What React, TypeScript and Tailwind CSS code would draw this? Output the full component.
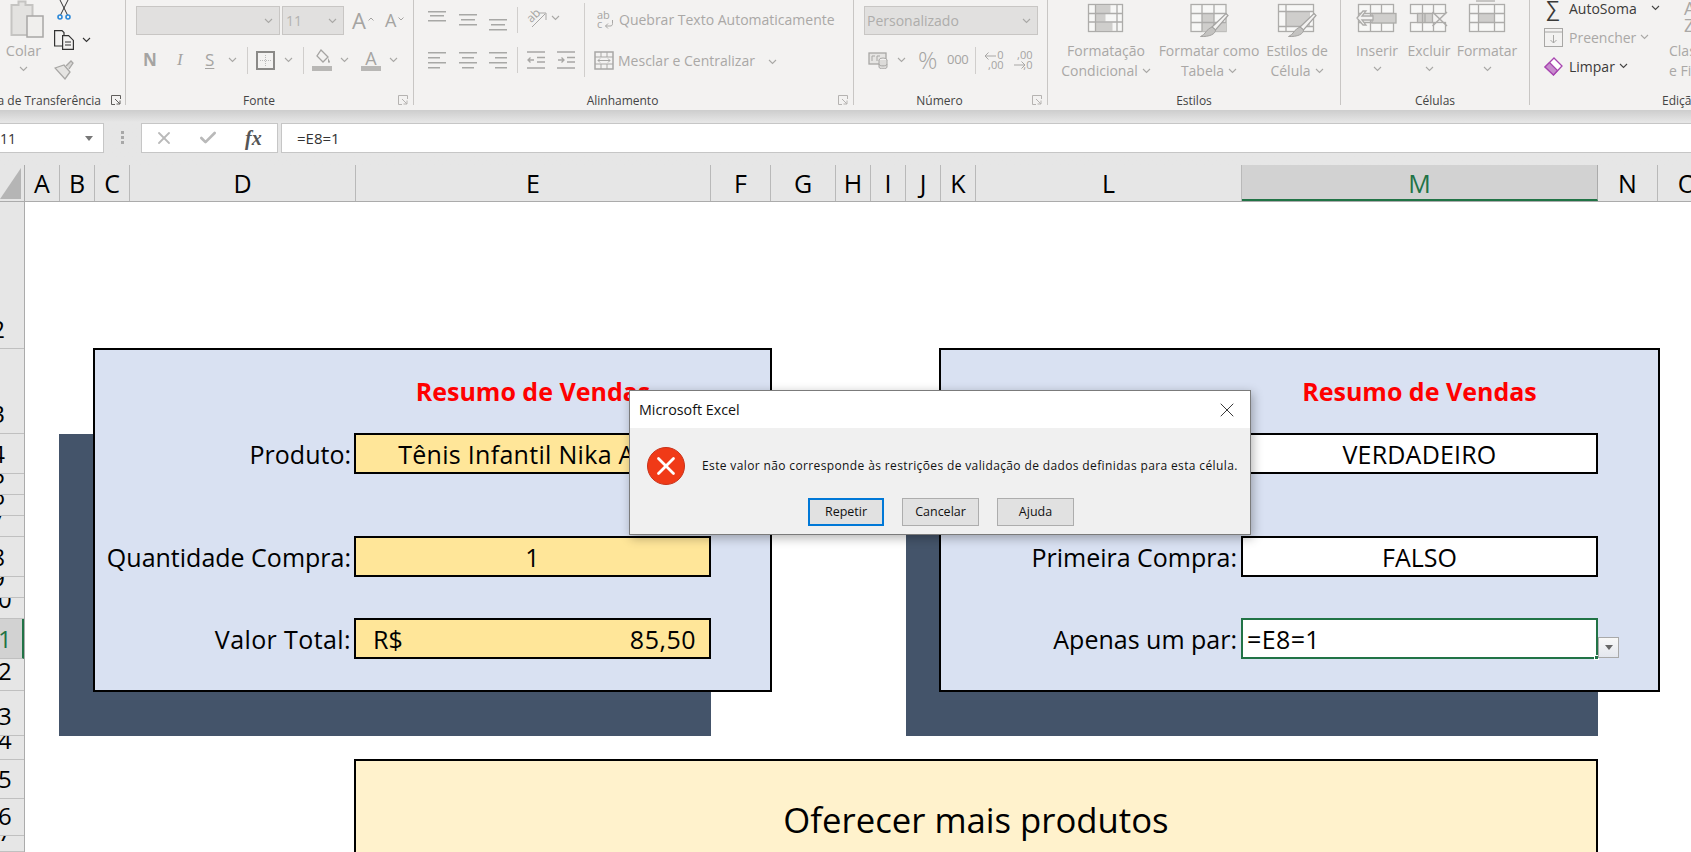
import { Check, X } from "lucide-react";

const gray = "#a9a8a6";
const st = "#adacaa";
const shade = "#cfcecc";

function Chev({ className = "", color = gray }: { className?: string; color?: string }) {
  return (
    <svg width="9" height="6" viewBox="0 0 9 6" className={`shrink-0 ${className}`}>
      <path d="M1 1l3.5 3.5L8 1" fill="none" stroke={color} strokeWidth="1.1" />
    </svg>
  );
}

function Launcher({ className = "", dark = false }: { className?: string; dark?: boolean }) {
  const c = dark ? "#605e5c" : "#b5b3b1";
  return (
    <svg width="10" height="10" viewBox="0 0 10 10" className={`absolute bottom-0 ${className}`}>
      <path d="M9.5 4V.5H.5v9H4" fill="none" stroke={c} />
      <path d="M4 4l5 5M9 5.5V9H5.5" fill="none" stroke={c} />
    </svg>
  );
}

// linhas de alinhamento: cada item e [y, x, largura]
function Lines({ rows }: { rows: number[][] }) {
  return (
    <svg width="19" height="40" viewBox="0 0 19 40" className="shrink-0">
      {rows.map(([y, x, w]) => (
        <rect key={y} x={x} y={y} width={w} height="1.5" fill="#a8a8a6" />
      ))}
    </svg>
  );
}

function Sep({ className = "" }: { className?: string }) {
  return <div className={`w-px bg-[#d0cecc] shrink-0 ${className}`} />;
}

function Brush() {
  return (
    <>
      <path d="M38 13.5l2 2-12.5 14.5-3.5-3z" fill="#f3f2f1" stroke="#a3a2a0" strokeWidth="1.2" />
      <path d="M24 27l3.5 3c0 4-6 7-15 6.5 5-1.500 6-8 11.500-9.500z" fill="#c4c3c1" stroke="#a3a2a0" strokeWidth="1" />
    </>
  );
}

type IconKind = "cond" | "table" | "style" | "insert" | "delete" | "format";

// desenhos dos botoes grandes de Estilos e Celulas
function TableIcon({ kind }: { kind: IconKind }) {
  return (
    <svg width="42" height="38" viewBox="0 0 42 38" className="shrink-0">
      <g fill="none" stroke={st} strokeWidth="1.3">
        {kind === "cond" && (
          <>
            <rect x="3.500" y="4.500" width="34" height="27" fill="#f7f7f6" />
            <rect x="10.500" y="5" width="15" height="8.500" fill={shade} stroke="none" />
            <rect x="10.500" y="14" width="10" height="7.500" fill={shade} stroke="none" />
            <rect x="10.500" y="22.500" width="17" height="8.500" fill={shade} stroke="none" />
            <path d="M3.500 13.500h34M3.500 22h34M10.500 4.500v27M32 4.500v27" />
          </>
        )}
        {kind === "table" && (
          <>
            <rect x="3" y="4.500" width="35" height="27" fill="#f7f7f6" />
            <rect x="14" y="13.500" width="12" height="9" fill={shade} stroke="none" />
            <rect x="14" y="22.500" width="24" height="9" fill={shade} stroke="none" />
            <path d="M3 13.500h35M3 22.500h35M14 4.500v27M26 4.500v27" />
            <Brush />
          </>
        )}
        {kind === "style" && (
          <>
            <rect x="2.500" y="4.500" width="35" height="27" fill="#f7f7f6" />
            <rect x="10" y="11.500" width="24" height="15" fill={shade} stroke="none" />
            <path d="M2.500 11.500h35M2.500 26.500h35M10 4.500v27" />
            <Brush />
          </>
        )}
        {kind === "insert" && (
          <>
            <rect x="2.500" y="4.500" width="35" height="27" fill="#f7f7f6" />
            <path d="M2.500 13.500h35M2.500 22.500h35M14.500 4.500v27M25.500 4.500v27" />
            <rect x="16" y="13.500" width="24" height="9.500" fill={shade} />
            <path d="M17 16H6l4-5H7l-6 7 6 7h3l-4-5h11z" fill="#f3f2f1" />
          </>
        )}
        {kind === "delete" && (
          <>
            <rect x="2.500" y="4.500" width="35" height="9" fill="#f7f7f6" />
            <rect x="2.500" y="22.500" width="35" height="9" fill="#f7f7f6" />
            <rect x="9.500" y="13.500" width="15" height="9" fill={shade} />
            <path d="M14.500 4.500v27M25.500 4.500v9M25.500 22.500v9M17 13.500v9" />
            <path d="M24.500 12l14.500 14M39 12L24.500 26" stroke={st} strokeWidth="1.500" />
          </>
        )}
        {kind === "format" && (
          <>
            <path d="M10 1h19" />
            <rect x="3.500" y="4.500" width="35" height="27" fill="#f7f7f6" />
            <rect x="12.500" y="13.500" width="16" height="9" fill={shade} stroke="none" />
            <path d="M3.500 13.500h35M3.500 22.500h35M12.500 4.500v27M28.500 4.500v27" />
          </>
        )}
      </g>
    </svg>
  );
}

function BigButton({ kind, lines, width, chevOnly }: { kind: IconKind; lines: string[]; width: string; chevOnly?: boolean }) {
  return (
    <div className={`flex flex-col items-center text-[14px] leading-[20px] text-[#aaa8a6] ${width}`}>
      <div className="h-[41px]">
        <TableIcon kind={kind} />
      </div>
      <div className="whitespace-nowrap">{lines[0]}</div>
      {chevOnly ? (
        <Chev className="mt-[5px]" />
      ) : (
        <div className="flex items-center gap-[4px] whitespace-nowrap">
          {lines[1]}
          <Chev />
        </div>
      )}
    </div>
  );
}

function Caret({ down = false }: { down?: boolean }) {
  return (
    <svg width="6" height="4" viewBox="0 0 6 4" className="self-start mt-[11px] ml-[2px]">
      <path d={down ? "M.5.5L3 3 5.500.5" : "M.5 3.500L3 1l2.500 2.500"} fill="none" stroke="#a5a4a2" />
    </svg>
  );
}

function Ribbon() {
  return (
    <div className="flex h-[110px] bg-[#f3f2f1] overflow-hidden text-[12px] text-[#444]">
      {/* Area de transferencia */}
      <div className="relative w-[126px] h-[105px] shrink-0 border-r border-[#c8c6c4]">
        <div className="flex h-[88px]">
          <div className="w-[47px] flex flex-col items-center">
            <svg width="47" height="38" viewBox="0 0 47 38" className="shrink-0">
              <path d="M11.500 5h7V1.500h7V5h7v30h-21z" fill="#e3e2e0" stroke="#c5c4c2" strokeWidth="2" />
              <rect x="27" y="16" width="16" height="21" fill="#f0efed" stroke="#a8a7a5" strokeWidth="1.500" />
            </svg>
            <span className="text-[14.5px] leading-[20px] text-[#aaa8a6] mt-[3px]">Colar</span>
            <Chev className="mt-[5px]" />
          </div>
          <div className="flex flex-col pl-[7px]">
            <svg width="15" height="20" viewBox="0 0 15 20" className="ml-[3px] shrink-0">
              <path d="M3 0l7.500 15M11 0L3.500 15" fill="none" stroke="#333" strokeWidth="1" />
              <circle cx="3" cy="17" r="2" fill="none" stroke="#2b88d8" strokeWidth="1.600" />
              <circle cx="11" cy="17" r="2" fill="none" stroke="#2b88d8" strokeWidth="1.600" />
            </svg>
            <div className="flex items-center mt-[10px]">
              <svg width="20" height="20" viewBox="0 0 20 20" className="shrink-0">
                <path d="M8 16H.6V.6H8l2 2v3" fill="none" stroke="#333" strokeWidth="1.200" />
                <path d="M8.600 5.600h6l4.800 4.800v9H8.600z" fill="#f3f2f1" stroke="#333" strokeWidth="1.200" />
                <path d="M11 12h6M11 15h6" stroke="#333" />
              </svg>
              <Chev color="#333" className="ml-[8px]" />
            </div>
            <svg width="20" height="20" viewBox="0 0 20 20" className="mt-[10px] shrink-0">
              <path d="M1 8l9-3 6 7-5 7z" fill="#e5e4e2" stroke="#a8a7a5" strokeWidth="1.300" />
              <path d="M12 6l5-5 2 2-4 6" fill="#d8d7d5" stroke="#a8a7a5" strokeWidth="1.300" />
            </svg>
          </div>
        </div>
        <div className="flex justify-end pr-[24px] whitespace-nowrap leading-[18px] pt-[4px] text-[#444] h-[17px]">Área de Transferência</div>
        <Launcher dark className="left-[111px]" />
      </div>

      {/* Fonte */}
      <div className="relative w-[288px] h-[105px] shrink-0 border-r border-[#c8c6c4]">
        <div className="h-[88px] pl-[10px] pt-[6px]">
          <div className="flex items-center">
            <div className="w-[144px] h-[29px] bg-[#e1e0df] border border-[#c8c6c4] flex items-center justify-end pr-[6px]">
              <Chev />
            </div>
            <div className="ml-[2px] w-[62px] h-[29px] bg-[#e1e0df] border border-[#c8c6c4] flex items-center justify-between pl-[3px] pr-[6px] text-[14px] text-[#b3b2b0]">
              11
              <Chev />
            </div>
            <span className="ml-[8px] w-[14px] text-[22px] leading-[29px] text-[#a5a4a2]">A</span>
            <Caret />
            <span className="ml-[11px] w-[11px] text-[18px] leading-[29px] text-[#a5a4a2]">A</span>
            <Caret down />
          </div>
          <div className="flex items-center h-[30px] mt-[10px] text-[#a5a4a2]">
            <span className="ml-[7px] w-[12px] text-[17px] font-bold leading-[30px]">N</span>
            <span className="ml-[22px] w-[7px] text-[17px] italic font-['Liberation_Serif',serif] leading-[30px]">I</span>
            <span className="ml-[21px] w-[10px] text-[17px] underline underline-offset-2 leading-[30px]">S</span>
            <Chev className="ml-[13px]" />
            <Sep className="h-[27px] ml-[10px]" />
            <svg width="19" height="19" viewBox="0 0 19 19" className="ml-[8px] shrink-0">
              <rect x="1" y="1" width="17" height="17" fill="none" stroke="#8a8987" strokeWidth="2" />
              <path d="M9.500 4v11M4 9.500h11" stroke="#bbb" strokeDasharray="1 1" />
            </svg>
            <Chev className="ml-[9px]" />
            <Sep className="h-[27px] ml-[10px]" />
            <svg width="20" height="22" viewBox="0 0 20 22" className="ml-[8px] shrink-0">
              <path d="M9 1l7 7-5 5-6-6z" fill="#f3f2f1" stroke="#a5a4a2" strokeWidth="1.300" />
              <path d="M16 9c1 2 2 3 2 4s-2 1-2 0z" fill="#a5a4a2" />
              <rect x="0" y="17" width="20" height="5" fill="#b8b7b5" />
            </svg>
            <Chev className="ml-[8px]" />
            <div className="ml-[12px] relative w-[20px] h-[22px] text-center text-[18px] leading-[19px]">
              A
              <div className="absolute bottom-0 left-0 w-[20px] h-[5px] bg-[#b8b7b5]" />
            </div>
            <Chev className="ml-[8px]" />
          </div>
        </div>
        <div className="h-[17px] text-center leading-[18px] pt-[4px] pr-[21px]">Fonte</div>
        <Launcher className="right-[5px]" />
      </div>

      {/* Alinhamento */}
      <div className="relative w-[440px] h-[105px] shrink-0 border-r border-[#c8c6c4]">
        <div className="h-[88px] pl-[14px] flex text-[14px] text-[#aaa8a6]">
          <div className="w-[156px] shrink-0">
            <div className="flex items-start h-[40px]">
              <Lines rows={[[11, 0, 18], [15, 2, 14], [20, 0, 18]]} />
              <div className="ml-[12px]">
                <Lines rows={[[14, 0, 18], [19, 2, 14], [24, 0, 18]]} />
              </div>
              <div className="ml-[11px]">
                <Lines rows={[[19, 0, 18], [24, 2, 14], [29, 0, 18]]} />
              </div>
              <Sep className="h-[26px] mt-[7px] ml-[9px]" />
              <svg width="21" height="22" viewBox="0 0 21 22" className="mt-[7px] ml-[8px] shrink-0">
                <text x="1" y="14" fontSize="12" fill="#a5a4a2" transform="rotate(-45 6 10)">ab</text>
                <path d="M6 20L19 7M13 6h7v7" fill="none" stroke="#a8a7a5" />
              </svg>
              <Chev className="mt-[15px] ml-[4px]" />
            </div>
            <div className="flex items-start h-[40px]">
              <Lines rows={[[12, 0, 18], [17, 0, 12], [22, 0, 18], [27, 0, 12]]} />
              <div className="ml-[12px]">
                <Lines rows={[[12, 0, 18], [17, 3, 12], [22, 0, 18], [27, 3, 12]]} />
              </div>
              <div className="ml-[11px]">
                <Lines rows={[[12, 0, 18], [17, 6, 12], [22, 0, 18], [27, 6, 12]]} />
              </div>
              <Sep className="h-[26px] mt-[7px] ml-[9px]" />
              <svg width="18" height="18" viewBox="0 0 18 18" className="mt-[11px] ml-[9px] shrink-0">
                <path d="M0 1h18M10 6.500h8M10 11h8M0 17h18M7 9H1M3.500 6.500L1 9l2.500 2.500" fill="none" stroke="#a8a7a5" strokeWidth="1.300" />
              </svg>
              <svg width="18" height="18" viewBox="0 0 18 18" className="mt-[11px] ml-[12px] shrink-0">
                <path d="M0 1h18M10 6.500h8M10 11h8M0 17h18M1 9h6M4.500 6.500L7 9l-2.500 2.500" fill="none" stroke="#a8a7a5" strokeWidth="1.300" />
              </svg>
            </div>
          </div>
          <Sep className="h-[74px] mt-[3px]" />
          <div className="pl-[12px]">
            <div className="flex items-start h-[40px]">
              <svg width="18" height="18" viewBox="0 0 18 18" className="mt-[11px] shrink-0">
                <text x="0" y="8" fontSize="11" fill="#a5a4a2">ab</text>
                <text x="0" y="17" fontSize="11" fill="#a5a4a2">c</text>
                <path d="M15.500 9v3.500c0 2-1 2.500-2.500 2.500H8.500M11 12.500L8.500 15l2.500 2.500" fill="none" stroke="#a8a7a5" />
              </svg>
              <span className="ml-[4px] mt-[10px] whitespace-nowrap leading-[20px]">Quebrar Texto Automaticamente</span>
            </div>
            <div className="flex items-start h-[40px] -ml-[3px]">
              <svg width="20" height="19" viewBox="0 0 20 19" className="mt-[11px] shrink-0">
                <rect x="1" y="1" width="18" height="17" fill="#f3f2f1" stroke="#a8a7a5" strokeWidth="1.500" />
                <path d="M1 6h18M1 13h18M7 1v5M13 1v5M7 13v5M13 13v5M4 9.500h12M6 7.500l-2 2 2 2M14 7.500l2 2-2 2" fill="none" stroke="#a8a7a5" />
              </svg>
              <span className="ml-[4px] mt-[11px] whitespace-nowrap leading-[20px]">Mesclar e Centralizar</span>
              <Chev className="mt-[19px] ml-[13px]" />
            </div>
          </div>
        </div>
        <div className="h-[17px] text-center leading-[18px] pt-[4px] pr-[22px]">Alinhamento</div>
        <Launcher className="right-[5px]" />
      </div>

      {/* Numero */}
      <div className="relative w-[194px] h-[105px] shrink-0 border-r border-[#c8c6c4]">
        <div className="h-[88px] pl-[10px] pt-[6px] text-[#a5a4a2]">
          <div className="w-[174px] h-[29px] bg-[#e1e0df] border border-[#c8c6c4] flex items-center justify-between pl-[2px] pr-[6px] text-[14px] text-[#aeadab]">
            Personalizado
            <Chev />
          </div>
          <div className="flex items-center h-[30px] mt-[10px]">
            <svg width="20" height="17" viewBox="0 0 20 17" className="ml-[4px] shrink-0">
              <rect x="1" y="1" width="17" height="11" fill="#e6e5e3" stroke="#a8a7a5" strokeWidth="1.300" />
              <path d="M4 4h3M4 4v5M9 4h3M9 4v5" stroke="#a8a7a5" />
              <ellipse cx="15" cy="8" rx="4" ry="2" fill="#f3f2f1" stroke="#a8a7a5" />
              <path d="M11 8v7c0 2.500 8 2.500 8 0V8M11 12c0 2.500 8 2.500 8 0" fill="#dcdbd9" stroke="#a8a7a5" />
            </svg>
            <Chev className="ml-[9px]" />
            <span className="ml-[12px] w-[18px] text-[24px] leading-[30px] font-light">%</span>
            <span className="ml-[11px] w-[20px] text-[13px] tracking-[-0.3px]">000</span>
            <Sep className="h-[27px] ml-[8px]" />
            <svg width="20" height="20" viewBox="0 0 20 20" className="ml-[8px] shrink-0">
              <path d="M12 6H1M4.500 2.500L1 6l3.500 3.500" fill="none" stroke="#a8a7a5" />
              <text x="19.500" y="9" fontSize="11" textAnchor="end" fill="#a5a4a2">0</text>
              <text x="19.500" y="19" fontSize="11" textAnchor="end" fill="#a5a4a2">,00</text>
            </svg>
            <svg width="20" height="20" viewBox="0 0 20 20" className="ml-[9px] shrink-0">
              <text x="19.500" y="9" fontSize="11" textAnchor="end" fill="#a5a4a2">,00</text>
              <path d="M1 15h11M8.500 11.500L12 15l-3.500 3.500" fill="none" stroke="#a8a7a5" />
              <text x="19.500" y="19" fontSize="11" textAnchor="end" fill="#a5a4a2">,0</text>
            </svg>
          </div>
        </div>
        <div className="h-[17px] text-center leading-[18px] pt-[4px] pr-[22px]">Número</div>
        <Launcher className="right-[5px]" />
      </div>

      {/* Estilos */}
      <div className="w-[293px] h-[105px] shrink-0 border-r border-[#c8c6c4]">
        <div className="h-[88px] flex pl-[8px]">
          <BigButton kind="cond" lines={["Formatação", "Condicional"]} width="w-[100px]" />
          <BigButton kind="table" lines={["Formatar como", "Tabela"]} width="w-[106px]" />
          <BigButton kind="style" lines={["Estilos de", "Célula"]} width="w-[70px]" />
        </div>
        <div className="h-[17px] text-center leading-[18px] pt-[4px]">Estilos</div>
      </div>

      {/* Celulas */}
      <div className="w-[189px] h-[105px] shrink-0 border-r border-[#c8c6c4]">
        <div className="h-[88px] flex pl-[10px]">
          <BigButton kind="insert" lines={["Inserir"]} width="w-[52px]" chevOnly />
          <BigButton kind="delete" lines={["Excluir"]} width="w-[52px]" chevOnly />
          <BigButton kind="format" lines={["Formatar"]} width="w-[64px]" chevOnly />
        </div>
        <div className="h-[17px] text-center leading-[18px] pt-[4px]">Células</div>
      </div>

      {/* Edicao */}
      <div className="flex-1 min-w-0 h-[105px]">
        <div className="h-[88px] flex pl-[14px] text-[14px]">
          <div className="w-[125px] shrink-0">
            <div className="flex items-center h-[20px] -mt-[2px] text-[#3b3a39]">
              <span className="text-[21px] w-[25px] pl-[2px] leading-[20px]">∑</span>
              <span>AutoSoma</span>
              <Chev color="#444" className="ml-[14px]" />
            </div>
            <div className="flex items-center h-[24px] mt-[7px] text-[#aaa8a6]">
              <svg width="19" height="19" viewBox="0 0 19 19" className="mr-[6px] shrink-0">
                <rect x=".5" y=".5" width="18" height="18" fill="none" stroke="#a8a7a5" />
                <path d="M1 4h17" stroke="#a8a7a5" />
                <path d="M9.500 7v8M6.500 12l3 3 3-3" fill="none" stroke="#a8a7a5" />
              </svg>
              <span>Preencher</span>
              <Chev className="ml-[4px]" />
            </div>
            <div className="flex items-center h-[24px] mt-[5px] text-[#3b3a39]">
              <svg width="19" height="19" viewBox="0 0 19 19" className="mr-[6px] shrink-0">
                <path d="M10 1l8 8-8.500 9L1 10z" fill="#fff" stroke="#a744b0" strokeWidth="1.300" />
                <path d="M5.500 5.500l8 8-4 4.500L1 10z" fill="#c78ccd" stroke="#a744b0" strokeWidth="1.200" />
              </svg>
              <span>Limpar</span>
              <Chev color="#444" className="ml-[4px]" />
            </div>
          </div>
          <div className="text-[#aaa8a6] leading-[20px] whitespace-nowrap">
            <div className="h-[41px] pl-[15px] text-[18px] leading-[17px]">
              A
              <br />
              Z
            </div>
            Classificar
            <br />e Filtrar
          </div>
        </div>
        <div className="h-[17px] leading-[18px] pt-[4px] pl-[132px] whitespace-nowrap">Edição</div>
      </div>
    </div>
  );
}

function FormulaBar() {
  return (
    <div className="h-[55px] bg-gradient-to-b from-[#cdcdcd] from-0% via-[#e6e6e6] via-[22%] to-[#e6e6e6] pt-[13px] flex items-start text-[14px]">
      <div className="w-[104px] h-[30px] bg-white border border-[#c6c6c6] border-l-0 flex items-center justify-between pr-[10px] text-[#333]">
        11
        <svg width="8" height="5" viewBox="0 0 8 5">
          <path d="M0 0h8L4 5z" fill="#777" />
        </svg>
      </div>
      <div className="w-[37px] flex flex-col items-center gap-[2px] pt-[8px]">
        <div className="w-[3px] h-[3px] bg-[#a8a8a8]" />
        <div className="w-[3px] h-[3px] bg-[#a8a8a8]" />
        <div className="w-[3px] h-[3px] bg-[#a8a8a8]" />
      </div>
      <div className="w-[137px] h-[30px] bg-white border border-[#c6c6c6] flex items-center">
        <X className="w-[20px] h-[20px] ml-[12px] text-[#b9b9b9]" strokeWidth={2.2} />
        <Check className="w-[20px] h-[20px] ml-[24px] text-[#b9b9b9]" strokeWidth={3.2} />
        <span className="ml-[27px] text-[20px] italic font-bold text-[#555] font-['Liberation_Serif',serif] leading-[20px]">fx</span>
      </div>
      <div className="flex-1 ml-[3px] h-[30px] bg-white border border-[#c6c6c6] border-r-0 flex items-center pl-[15px] text-[15px] text-[#333]">=E8=1</div>
    </div>
  );
}

const columns = [
  { l: "A", w: "w-[35px]" },
  { l: "B", w: "w-[35px]" },
  { l: "C", w: "w-[35px]" },
  { l: "D", w: "w-[226px]" },
  { l: "E", w: "w-[355px]" },
  { l: "F", w: "w-[60px]" },
  { l: "G", w: "w-[65px]" },
  { l: "H", w: "w-[35px]" },
  { l: "I", w: "w-[35px]" },
  { l: "J", w: "w-[35px]" },
  { l: "K", w: "w-[35px]" },
  { l: "L", w: "w-[266px]" },
  { l: "M", w: "w-[356px]", active: true },
  { l: "N", w: "w-[60px]" },
  { l: "O", w: "w-[60px]" },
];

const rows = [
  { n: "2", h: "h-[147px]" },
  { n: "3", h: "h-[85px]" },
  { n: "4", h: "h-[40px]" },
  { n: "5", h: "h-[21px]" },
  { n: "6", h: "h-[21px]" },
  { n: "7", h: "h-[21px]" },
  { n: "8", h: "h-[40px]" },
  { n: "9", h: "h-[21px]" },
  { n: "10", h: "h-[21px]" },
  { n: "11", h: "h-[40px]", active: true },
  { n: "12", h: "h-[32px]" },
  { n: "13", h: "h-[45px]" },
  { n: "14", h: "h-[24px]" },
  { n: "15", h: "h-[39px]" },
  { n: "16", h: "h-[37px]" },
  { n: "17", h: "h-[16px]" },
];

function ColumnHeader() {
  return (
    <div className="flex h-[37px] bg-[#e6e6e6] border-b border-[#ababab] text-[25px] leading-[37px] text-black overflow-hidden">
      <div className="w-[25px] shrink-0 border-r border-[#ababab] flex items-end">
        <svg width="22" height="31" viewBox="0 0 22 31" className="mb-[2px]">
          <path d="M21 0v31H0z" fill="#b5b5b5" />
        </svg>
      </div>
      {columns.map((c) => (
        <div
          key={c.l}
          className={`${c.w} shrink-0 text-center border-r border-[#b9b9b9] ${
            c.active ? "bg-[#d2d2d2] text-[#217346] border-b-2 border-b-[#217346] border-r-[#ababab]" : ""
          }`}
        >
          {c.l}
        </div>
      ))}
    </div>
  );
}

function RowHeader() {
  return (
    <div className="w-[25px] shrink-0 flex flex-col bg-[#e6e6e6] border-r border-[#ababab]">
      {rows.map((r) => (
        <div
          key={r.n}
          className={`${r.h} shrink-0 overflow-hidden flex items-end pb-[3px] text-[24px] leading-[32px] border-b border-[#c0c0c0] ${
            r.active ? "bg-[#d2d2d2] text-[#217346] border-r-2 border-r-[#217346]" : "text-black"
          }`}
        >
          {/* a coluna de linhas esta cortada pela borda esquerda da janela */}
          <span className="shrink-0 w-[50px] -ml-[27px] text-center">{r.n}</span>
        </div>
      ))}
    </div>
  );
}

function Cell({ className, children }: { className: string; children: React.ReactNode }) {
  return (
    <div className={`border-2 border-black flex items-center text-[25px] text-black z-10 -mt-px pt-[2px] ${className}`}>
      {children}
    </div>
  );
}

function Label({ className, children }: { className: string; children: React.ReactNode }) {
  return <div className={`flex items-center justify-end pr-[4px] pt-[1px] text-[25px] text-black z-10 whitespace-nowrap ${className}`}>{children}</div>;
}

function Sheet() {
  return (
    <div className="flex h-[650px] overflow-hidden">
      <RowHeader />
      <div className="flex-1 bg-white grid grid-cols-[35px_35px_35px_225px_356px_60px_65px_35px_35px_35px_35px_265px_357px_60px_1fr] grid-rows-[147px_85px_40px_21px_21px_21px_40px_21px_21px_40px_32px_45px_24px_39px_37px_16px]">
        {/* bloco esquerdo */}
        <div className="col-start-2 col-end-6 row-start-3 row-end-13 -ml-px bg-[#44546a]" />
        <div className="col-start-3 col-end-7 row-start-2 row-end-12 -ml-[2px] -mr-px -mb-px -mt-px bg-[#d9e1f2] border-2 border-black z-[1]" />
        <div className="col-start-5 col-end-6 row-start-2 row-end-3 flex items-center justify-center text-[25px] font-bold text-[#ff0000] z-10 whitespace-nowrap">
          Resumo de Vendas
        </div>
        <Label className="col-start-3 col-end-5 row-start-3 row-end-4">Produto:</Label>
        <Cell className="col-start-5 col-end-6 row-start-3 row-end-4 -ml-px justify-center pr-[15px] tracking-[0.3px] bg-[#ffe699] whitespace-nowrap overflow-hidden">
          Tênis Infantil Nika Air
        </Cell>
        <Label className="col-start-3 col-end-5 row-start-7 row-end-8">Quantidade Compra:</Label>
        <Cell className="col-start-5 col-end-6 row-start-7 row-end-8 -ml-px justify-center bg-[#ffe699]">1</Cell>
        <Label className="col-start-3 col-end-5 row-start-10 row-end-11 tracking-[0.4px]">Valor Total:</Label>
        <Cell className="col-start-5 col-end-6 row-start-10 row-end-11 -ml-px justify-between pl-[17px] pr-[13px] bg-[#ffe699]">
          <span>R$</span>
          <span className="tracking-[0.5px]">85,50</span>
        </Cell>

        {/* bloco direito */}
        <div className="col-start-10 col-end-14 row-start-3 row-end-13 bg-[#44546a]" />
        <div className="col-start-11 col-end-15 row-start-2 row-end-12 -ml-[2px] -mr-[2px] -mb-px -mt-px bg-[#d9e1f2] border-2 border-black z-[1]" />
        <div className="col-start-13 col-end-14 row-start-2 row-end-3 flex items-center justify-center text-[25px] font-bold text-[#ff0000] z-10 whitespace-nowrap">
          Resumo de Vendas
        </div>
        <Cell className="col-start-13 col-end-14 row-start-3 row-end-4 justify-center tracking-[0.2px] bg-white">VERDADEIRO</Cell>
        <Label className="col-start-11 col-end-13 row-start-7 row-end-8">Primeira Compra:</Label>
        <Cell className="col-start-13 col-end-14 row-start-7 row-end-8 justify-center bg-white">FALSO</Cell>
        <Label className="col-start-11 col-end-13 row-start-10 row-end-11">Apenas um par:</Label>
        <div className="col-start-13 col-end-14 row-start-10 row-end-11 relative bg-white border-2 border-[#217346] flex items-center pl-[4px] pt-[2px] text-[25px] tracking-[0.4px] text-black z-10 -mt-px">
          =E8=1
          <div className="absolute -right-[3px] -bottom-[3px] w-[5px] h-[5px] bg-[#217346] border border-white" />
          <div className="absolute -right-[23px] top-[17px] w-[21px] h-[21px] border border-[#a9a9a9] bg-gradient-to-b from-[#f8f8f8] to-[#e4e7ee] flex items-center justify-center">
            <svg width="8" height="5" viewBox="0 0 8 5">
              <path d="M0 0h8L4 5z" fill="#666" />
            </svg>
          </div>
        </div>

        {/* oferecer */}
        <div className="col-start-5 col-end-14 row-start-14 row-end-17 h-[122px] self-start -mt-px -ml-px bg-[#fff2cc] border-2 border-black flex items-center justify-center text-[34.7px] text-black">
          Oferecer mais produtos
        </div>
      </div>
    </div>
  );
}

function ErrorDialog() {
  return (
    <div className="absolute left-[629px] top-[390px] w-[622px] h-[145px] z-50 bg-[#f0f0f0] border border-[#7b7b7b] shadow-[2px_3px_10px_rgba(0,0,0,0.3)] text-[#111]">
      <div className="h-[37px] bg-white flex items-center justify-between pl-[9px] pr-[11px] text-[14.3px]">
        Microsoft Excel
        <X className="w-[24px] h-[24px] text-[#222]" strokeWidth={0.9} />
      </div>
      <div className="flex items-center pl-[17px] h-[64px] mt-[6px]">
        <div className="w-[38px] h-[38px] rounded-full bg-[#f03a17] border border-[#c9321a] flex items-center justify-center">
          <X className="w-[30px] h-[30px] text-white" strokeWidth={2.2} />
        </div>
        <span className="ml-[17px] text-[12px] tracking-[0.37px] whitespace-nowrap">
          Este valor não corresponde às restrições de validação de dados definidas para esta célula.
        </span>
      </div>
      <div className="flex pl-[178px] gap-[18px] text-[12.5px]">
        <div className="w-[76px] h-[28px] bg-[#e1e1e1] border-2 border-[#0078d7] flex items-center justify-center">Repetir</div>
        <div className="w-[77px] h-[28px] bg-[#e1e1e1] border border-[#adadad] flex items-center justify-center">Cancelar</div>
        <div className="w-[77px] h-[28px] bg-[#e1e1e1] border border-[#adadad] flex items-center justify-center">Ajuda</div>
      </div>
    </div>
  );
}

export default function App() {
  return (
    <div className="relative w-full h-[852px] overflow-hidden bg-white font-['Open_Sans',sans-serif]">
      <Ribbon />
      <FormulaBar />
      <ColumnHeader />
      <Sheet />
      <ErrorDialog />
    </div>
  );
}
